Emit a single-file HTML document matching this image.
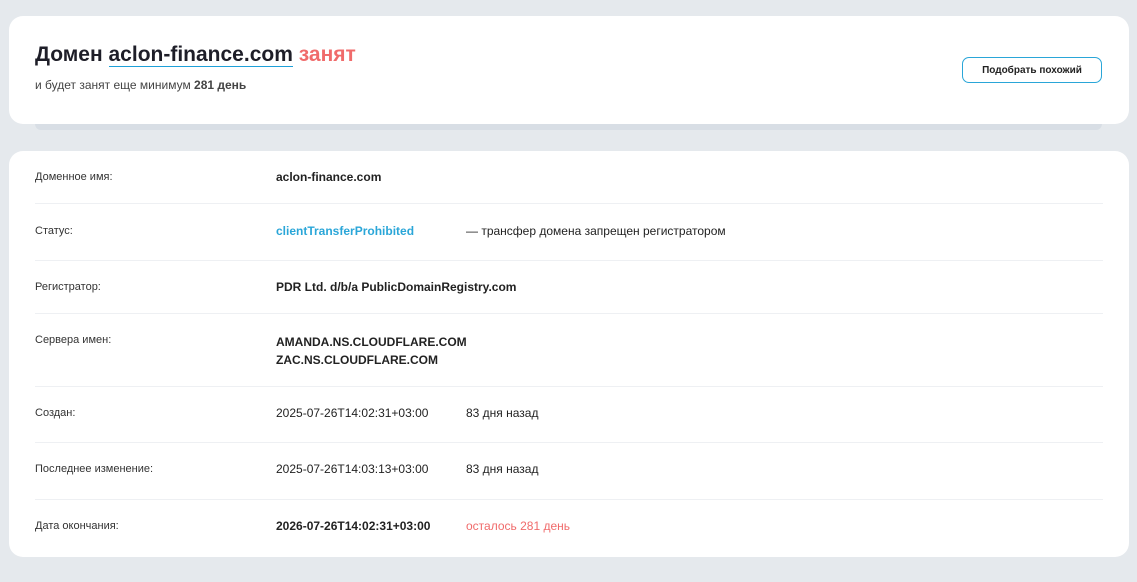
<!DOCTYPE html>
<html><head><meta charset="utf-8"><style>
*{margin:0;padding:0;box-sizing:border-box}
body{width:1137px;height:582px;background:#e5e9ed;font-family:"Liberation Sans","DejaVu Sans",sans-serif;color:#222;position:relative;overflow:hidden}
.c1{position:absolute;left:9px;top:16px;width:1120px;height:108px;background:#fff;border-radius:14px}
.sh{position:absolute;left:35px;top:118px;width:1067px;height:12px;background:#d8dee5;border-radius:0 0 6px 6px}
h1{position:absolute;left:26px;top:27px;font-size:21px;font-weight:bold;color:#1e1e28;white-space:nowrap}
h1 u{text-decoration:none;border-bottom:1px solid #1ea0d8}
h1 .r{color:#f06b6b}
.sub{position:absolute;left:26px;top:62px;font-size:12px;color:#444}
.btn{position:absolute;left:953px;top:41px;width:140px;height:26px;border:1px solid #2aa6d8;border-radius:7px;font-size:10px;font-weight:bold;text-align:center;line-height:26px;color:#222}
.c2{position:absolute;left:9px;top:151px;width:1120px;height:406px;background:#fff;border-radius:14px}
.row{position:absolute;left:26px;width:1068px;border-bottom:1px solid #eef0f3;font-size:12px}
.row:last-child{border:none}
.l{position:absolute;left:0;font-size:11px;color:#333;margin-top:1px}
.v{position:absolute;left:241px;color:#222}
.v2{position:absolute;left:431px}
b{font-weight:bold}
</style></head><body>
<div class="sh"></div>
<div class="c1">
<h1>Домен <u>aclon-finance.com</u> <span class="r">занят</span></h1>
<div class="sub">и будет занят еще минимум <b>281 день</b></div>
<div class="btn">Подобрать похожий</div>
</div>
<div class="c2">
<div class="row" style="top:0;height:53px"><span class="l" style="top:19px">Доменное имя:</span><b class="v" style="top:19px">aclon-finance.com</b></div>
<div class="row" style="top:53px;height:57px"><span class="l" style="top:20px">Статус:</span><b class="v" style="top:20px;color:#2aa6d8">clientTransferProhibited</b><span class="v2" style="top:20px">— трансфер домена запрещен регистратором</span></div>
<div class="row" style="top:110px;height:53px"><span class="l" style="top:19px">Регистратор:</span><b class="v" style="top:19px">PDR Ltd. d/b/a PublicDomainRegistry.com</b></div>
<div class="row" style="top:163px;height:73px"><span class="l" style="top:19px">Сервера имен:</span><b class="v" style="top:19px;line-height:18px">AMANDA.NS.CLOUDFLARE.COM<br>ZAC.NS.CLOUDFLARE.COM</b></div>
<div class="row" style="top:236px;height:56px"><span class="l" style="top:19px">Создан:</span><span class="v" style="top:19px">2025-07-26T14:02:31+03:00</span><span class="v2" style="top:19px">83 дня назад</span></div>
<div class="row" style="top:292px;height:57px"><span class="l" style="top:19px">Последнее изменение:</span><span class="v" style="top:19px">2025-07-26T14:03:13+03:00</span><span class="v2" style="top:19px">83 дня назад</span></div>
<div class="row" style="top:349px;height:57px"><span class="l" style="top:19px">Дата окончания:</span><b class="v" style="top:19px">2026-07-26T14:02:31+03:00</b><span class="v2" style="top:19px;color:#f06b6b">осталось 281 день</span></div>
</div>
</body></html>
